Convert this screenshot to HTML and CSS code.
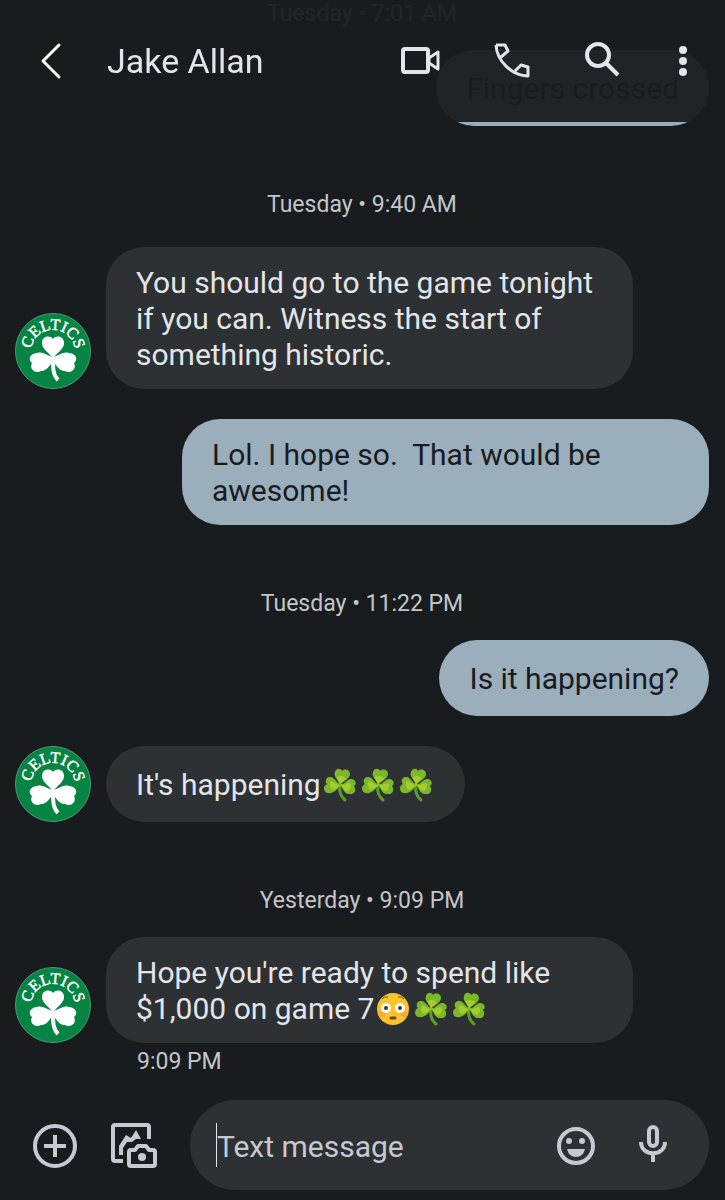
FILE: index.html
```html
<!DOCTYPE html>
<html lang="en">

<head>
  <meta charset="UTF-8">
  <meta name="viewport" content="width=device-width, initial-scale=1">
  <title>Jake Allan | Messages</title>
  <link rel="stylesheet" href="styles.css">
</head>

<body>

  <!-- shared emoji drawing -->
  <svg class="sprite" aria-hidden="true">
    <symbol id="shamrock" viewBox="0 0 38 36">
      <path d="M19 18 C18 24 19 29 24 33" fill="none" stroke="#5c9b2c" stroke-width="3" stroke-linecap="round" />
      <g fill="#7cb82a">
        <path d="M19 18 C18 13 12 10 14 5 C15 1 20 1 21 4 C24 1 29 3 29 7 C29 12 22 14 19 18z" />
        <path d="M20 17 C15 17 14 9 8 10 C4 11 4 15 6 17 C1 19 3 26 7 26 C13 27 16 22 20 18z" />
        <path d="M19 17 C24 18 26 11 31 12 C35 13 36 17 33 19 C36 23 33 28 29 27 C23 28 22 21 19 18z" />
      </g>
      <g fill="#a3cf2c">
        <path d="M19 18 C18 14 15 12 16 10 C20 8 24 9 25 12 C23 14 21 15 19 18z" />
        <path d="M19 18 C14 18 13 14 10 14 C8 17 9 21 12 23 C15 22 17 20 19 18z" />
        <path d="M20 18 C24 19 26 16 29 16 C31 19 30 22 27 24 C23 24 22 20 20 18z" />
      </g>
    </symbol>
  </svg>

  <header class="topbar">
    <button class="icon-btn" aria-label="Back">
      <svg viewBox="0 0 48 48"><path class="line back" d="M32 8 L16 24 L32 40" /></svg>
    </button>
    <h1>Jake Allan</h1>
    <nav class="actions">
      <button class="icon-btn" aria-label="Video call">
        <svg viewBox="0 0 48 48">
          <rect class="line heavy" x="8" y="12" width="25" height="23" rx="2" />
          <path class="line" d="M34 21 L43 15 V32 L34 26z" />
        </svg>
      </button>
      <button class="icon-btn" aria-label="Call">
        <svg viewBox="0 0 48 48">
          <path class="line" stroke-width="3.5" d="M9 8 H18 L21 14 L14 20 M9 8 C10 24 24 38 41 39 V30 L34 28 L28 34" />
        </svg>
      </button>
      <button class="icon-btn" aria-label="Search">
        <svg viewBox="0 0 48 48">
          <circle class="line heavy" cx="19" cy="18" r="11" />
          <path class="line heavy" d="M27 26 L39 38" />
        </svg>
      </button>
      <button class="icon-btn narrow" aria-label="More options">
        <svg viewBox="0 0 24 48"><circle cx="12" cy="13" r="4" /><circle cx="12" cy="24" r="4" /><circle cx="12" cy="35" r="4" /></svg>
      </button>
    </nav>
  </header>

  <main class="thread">
    <p class="day">Tuesday • 7:01 AM</p>
    <div class="row sent">
      <p class="bubble">Fingers crossed</p>
    </div>

    <p class="day">Tuesday • 9:40 AM</p>
    <div class="row first">
      <svg class="avatar" viewBox="0 0 76 76" role="img" aria-label="Jake Allan">
        <g id="celtics">
          <path id="arc" d="M16.2 41.8 A22 22 0 1 1 59.8 41.8" fill="none" />
          <circle cx="38" cy="38" r="37.5" fill="#058443" stroke="#4f9a72" stroke-width="1" />
          <text class="logo-text"><textPath href="#arc" startOffset="50%">CELTICS</textPath></text>
          <g fill="#fff">
            <path d="M38 46 C35 40 26 36 27 29 C28 23 35 22 38 26 C41 22 48 23 49 29 C50 36 41 40 38 46z" />
            <path d="M39 44 C33 44 29 38 22 40 C14 41 13 47 17 50 C14 56 20 61 26 58 C33 58 35 51 39 47z" />
            <path d="M37 44 C43 44 47 38 54 40 C62 41 63 47 59 50 C62 56 56 61 50 58 C43 58 41 51 37 47z" />
          </g>
          <path d="M38 46 C38 55 38 62 43 67" fill="none" stroke="#fff" stroke-width="4" />
        </g>
      </svg>
      <p class="bubble">You should go to the game tonight if you can. Witness the start of something historic.</p>
    </div>
    <div class="row sent">
      <p class="bubble">Lol. I hope so.&nbsp; That would be awesome!</p>
    </div>

    <p class="day">Tuesday • 11:22 PM</p>
    <div class="row sent">
      <p class="bubble">Is it happening?</p>
    </div>
    <div class="row">
      <svg class="avatar" viewBox="0 0 76 76" role="img" aria-label="Jake Allan"><use href="#celtics" /></svg>
      <p class="bubble">It's happening<svg class="emoji" role="img" aria-label="shamrock"><use href="#shamrock" /></svg><svg class="emoji" role="img" aria-label="shamrock"><use href="#shamrock" /></svg><svg class="emoji" role="img" aria-label="shamrock"><use href="#shamrock" /></svg></p>
    </div>

    <p class="day">Yesterday • 9:09 PM</p>
    <div class="row">
      <svg class="avatar" viewBox="0 0 76 76" role="img" aria-label="Jake Allan"><use href="#celtics" /></svg>
      <p class="bubble">Hope you're ready to spend like $1,000 on game 7<svg class="emoji" viewBox="0 0 38 36" role="img" aria-label="flushed face">
          <circle cx="19" cy="18" r="16" fill="#fcc32c" />
          <ellipse cx="8" cy="23" rx="4" ry="3" fill="#f9aa35" />
          <ellipse cx="30" cy="23" rx="4" ry="3" fill="#f9aa35" />
          <circle cx="12" cy="17" r="5" fill="#fff" />
          <circle cx="26" cy="17" r="5" fill="#fff" />
          <circle cx="12" cy="17" r="2" fill="#3d342b" />
          <circle cx="26" cy="17" r="2" fill="#3d342b" />
          <path d="M8 8 Q10 5 14 6 M24 6 Q28 5 30 8" fill="none" stroke="#6d4c2c" stroke-width="1" />
          <path d="M17 27 H21" fill="none" stroke="#6d4433" stroke-width="3" stroke-linecap="round" />
        </svg><svg class="emoji" role="img" aria-label="shamrock"><use href="#shamrock" /></svg><svg class="emoji" role="img" aria-label="shamrock"><use href="#shamrock" /></svg></p>
    </div>
    <p class="time">9:09 PM</p>
  </main>

  <footer class="composer">
    <button class="icon-btn" aria-label="Add attachment">
      <svg viewBox="0 0 48 48">
        <circle class="line heavy" cx="25" cy="25" r="20" />
        <path class="line heavy" d="M25 14 V36 M14 25 H36" />
      </svg>
    </button>
    <button class="icon-btn" aria-label="Gallery and camera">
      <svg viewBox="0 0 48 48">
        <path class="line heavy" d="M39 18 V6 Q39 4 37 4 H5 Q3 4 3 6 V38 Q3 40 5 40 H13" />
        <path d="M9 34 V25 L16 14 L21 17 L26 9 L31 18 H26 L22 21 H17 L13 27 V34z" />
        <path class="line heavy" d="M21 29 H25 L28 25 H36 L39 29 H43 Q45 29 45 31 V43 Q45 45 43 45 H21 Q19 45 19 43 V31 Q19 29 21 29z" />
        <circle cx="32" cy="36" r="4" />
      </svg>
    </button>
    <div class="field">
      <span class="caret"></span>
      <input type="text" placeholder="Text message" aria-label="Text message">
      <button class="icon-btn" aria-label="Emoji">
        <svg viewBox="0 0 48 48">
          <circle class="line heavy" cx="23" cy="25" r="17" />
          <circle cx="16" cy="20" r="3" />
          <circle cx="29" cy="20" r="3" />
          <path d="M14 28 H32 Q30 36 23 36 Q16 36 14 28z" />
        </svg>
      </button>
      <button class="icon-btn" aria-label="Voice message">
        <svg viewBox="0 0 48 48">
          <rect class="line heavy" x="20" y="6" width="8" height="19" rx="4" />
          <path class="line heavy" d="M12 21 C12 36 36 36 36 21 M24 32 V41" />
        </svg>
      </button>
    </div>
  </footer>

</body>

</html>
```

FILE: styles.css
```css
* {
  box-sizing: border-box;
}

body {
  margin: 0;
  min-height: 100vh;
  display: flex;
  flex-direction: column;
  background-color: #191c1f;
  color: #e2e5e9;
  font-family: Roboto, sans-serif;
  font-size: 30px;
  line-height: 36px;
}

p,
h1 {
  margin: 0;
}

.sprite {
  position: absolute;
  width: 0;
  height: 0;
}

.logo-text {
  font-family: "Liberation Serif", serif;
  font-size: 16px;
  text-anchor: middle;
  fill: #fff;
  stroke: #fff;
  stroke-width: 0.5px;
}

/* header, old messages show faintly through it */
.topbar {
  position: fixed;
  top: 0;
  left: 0;
  right: 0;
  z-index: 1;
  height: 122px;
  padding: 0 30px 0 27px;
  display: flex;
  align-items: center;
  gap: 32px;
  background-color: rgba(25, 28, 31, 0.95);
}

.topbar h1 {
  flex: 1;
  font-size: 34px;
  font-weight: 400;
}

.actions {
  display: flex;
  gap: 44px;
}

.icon-btn {
  flex: none;
  width: 48px;
  height: 48px;
  padding: 0;
  border: none;
  background: none;
  color: inherit;
  cursor: pointer;
}

.icon-btn.narrow {
  width: 24px;
}

.icon-btn svg {
  display: block;
  width: 100%;
  height: 100%;
  fill: currentColor;
}

.icon-btn .line {
  fill: none;
  stroke: currentColor;
  stroke-width: 3px;
  stroke-linejoin: round;
}

.icon-btn .heavy {
  stroke-width: 4px;
}

.icon-btn .back {
  stroke: #fff;
  stroke-linecap: round;
}

/* messages */
.thread {
  flex: 1;
  padding: 0 16px 0 15px;
}

.day {
  margin: 65px 0 22px;
  font-size: 23px;
  line-height: 28px;
  text-align: center;
  color: #c3c6ca;
}

.day:first-child {
  margin-top: 0;
}

.row {
  display: flex;
  align-items: flex-end;
  gap: 15px;
}

.row + .row {
  margin-top: 30px;
}

.row.first {
  margin-top: 28px;
}

.row.sent {
  justify-content: flex-end;
}

.avatar {
  flex: none;
  width: 76px;
  height: 76px;
}

.bubble {
  max-width: 527px;
  min-height: 76px;
  padding: 18px 30px 16px;
  align-content: center;
  border-radius: 38px;
  background-color: #2e3134;
}

.sent .bubble {
  background-color: #9baebc;
  color: #191c1f;
}

.emoji {
  width: 38px;
  height: 36px;
  vertical-align: top;
}

.time {
  margin: 5px 0 0 122px;
  font-size: 23px;
  line-height: 28px;
  color: #c3c6ca;
}

/* bottom bar */
.composer {
  padding: 0 16px 10px 30px;
  display: flex;
  align-items: center;
  gap: 32px;
  color: #c6c9d0;
}

.field {
  flex: 1;
  min-width: 0;
  height: 90px;
  padding: 0 32px 0 26px;
  display: flex;
  align-items: center;
  border-radius: 45px;
  background-color: #2e3134;
}

.caret {
  width: 1px;
  height: 44px;
  background-color: #e2e5e9;
}

.field input {
  flex: 1;
  min-width: 0;
  padding: 4px 0 0;
  border: none;
  outline: none;
  background: none;
  color: #e2e5e9;
  font: inherit;
}

.field input::placeholder {
  color: #c6c9d0;
  opacity: 1;
}

.field .icon-btn + .icon-btn {
  margin-left: 28px;
}
```
